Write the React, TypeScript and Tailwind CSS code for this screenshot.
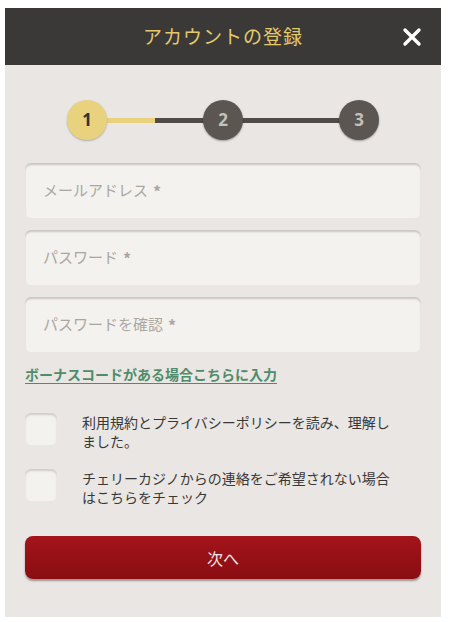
import React from "react";

const font = { fontFamily: '"Noto Sans CJK JP", "Noto Sans", sans-serif' };

function Step({ n, active }: { n: number; active?: boolean }) {
  return (
    <div
      className={
        "relative z-10 flex h-[40px] w-[40px] items-center justify-center rounded-full text-[17px] font-bold " +
        (active
          ? "bg-[#e8d27e] text-[#333] shadow-[0_1px_2px_rgba(0,0,0,0.25)]"
          : "bg-[#5b5651] text-[#c4c0bb] shadow-[0_1px_2px_rgba(0,0,0,0.35)]")
      }
      style={{ fontFamily: '"Open Sans", "Noto Sans", sans-serif' }}
    >
      {n}
    </div>
  );
}

function Field({ label }: { label: string }) {
  return (
    <div className="flex h-[55px] items-center rounded-[6px] bg-[#f4f2ee] pl-[18px] text-[15px] text-[#aaa7a3] shadow-[inset_0_2px_2px_rgba(0,0,0,0.18)]">
      <span>{label}</span>
      <span className="ml-[5px] text-[16px] font-bold">*</span>
    </div>
  );
}

function Check({ lines }: { lines: string[] }) {
  return (
    <div className="flex items-start">
      <div className="h-[32px] w-[32px] shrink-0 rounded-[6px] bg-[#f4f2ee] shadow-[inset_0_2px_2px_rgba(0,0,0,0.15)]" />
      <div className="ml-[25px] text-[14px] leading-[19px] text-[#3a3836]">
        {lines.map((l, i) => (
          <div key={i}>{l}</div>
        ))}
      </div>
    </div>
  );
}

export default function App() {
  return (
    <div className="min-h-[622px] bg-white pt-[8px] pl-[5px]" style={font}>
      <div className="w-[436px] bg-[#e9e6e3]">
        <div className="relative flex h-[57px] items-center justify-center bg-[#3a3938]">
          <span className="text-[19px] tracking-[1px] text-[#e3c96a]">アカウントの登録</span>
          <svg
            className="absolute right-[19px] top-[19px]"
            width="20"
            height="20"
            viewBox="0 0 20 20"
          >
            <path d="M3 3 L17 17 M17 3 L3 17" stroke="#fff" strokeWidth="3.4" strokeLinecap="round" />
          </svg>
        </div>
        <div className="px-[20px] pb-[38px]">
          <div className="flex items-center px-[42px] pt-[35px]">
            <Step n={1} active />
            <div className="flex h-[5px] flex-1 -mx-[2px]">
              <div className="h-full flex-1 bg-[#e8d27e]" />
              <div className="h-full flex-1 bg-[#504b47]" />
            </div>
            <Step n={2} />
            <div className="h-[5px] flex-1 -mx-[2px] bg-[#504b47]" />
            <Step n={3} />
          </div>
          <div className="mt-[23px] flex flex-col gap-[12px]">
            <Field label="メールアドレス" />
            <Field label="パスワード" />
            <Field label="パスワードを確認" />
          </div>
          <div className="mt-[12px] text-[14px] font-bold text-[#4f8c6c] underline underline-offset-[3px]">
            ボーナスコードがある場合こちらに入力
          </div>
          <div className="mt-[28px] flex flex-col gap-[18px]">
            <Check lines={["利用規約とプライバシーポリシーを読み、理解し", "ました。"]} />
            <Check lines={["チェリーカジノからの連絡をご希望されない場合", "はこちらをチェック"]} />
          </div>
          <button
            className="mt-[29px] flex h-[43px] w-full items-center justify-center rounded-[8px] bg-gradient-to-b from-[#a3141a] to-[#8a0d12] text-[16px] text-[#f2e6e6] shadow-[0_2px_2px_rgba(0,0,0,0.35)]"
            style={font}
          >
            次へ
          </button>
        </div>
      </div>
    </div>
  );
}
